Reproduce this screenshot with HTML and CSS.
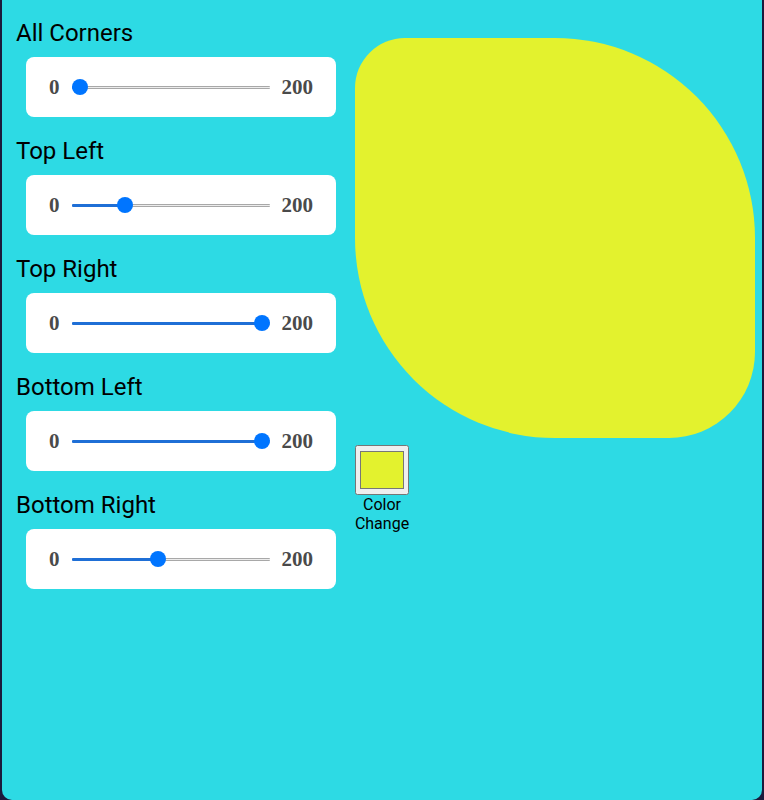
FILE: index.html
```html
<!DOCTYPE html>
<html>
<head>
<meta charset="utf-8">
<link rel="stylesheet" href="styles.css">
</head>
<body>
<div class="app">
  <div class="controls">
    <h2 class="label">All Corners</h2>
    <div class="card"><span class="num">0</span><input class="slider" type="range" min="0" max="200" value="0" style="--p:0"><span class="num">200</span></div>
    <h2 class="label">Top Left</h2>
    <div class="card"><span class="num">0</span><input class="slider" type="range" min="0" max="200" value="50" style="--p:0.25"><span class="num">200</span></div>
    <h2 class="label">Top Right</h2>
    <div class="card"><span class="num">0</span><input class="slider" type="range" min="0" max="200" value="200" style="--p:1"><span class="num">200</span></div>
    <h2 class="label">Bottom Left</h2>
    <div class="card"><span class="num">0</span><input class="slider" type="range" min="0" max="200" value="200" style="--p:1"><span class="num">200</span></div>
    <h2 class="label">Bottom Right</h2>
    <div class="card"><span class="num">0</span><input class="slider" type="range" min="0" max="200" value="86" style="--p:0.43"><span class="num">200</span></div>
  </div>
  <div class="preview">
    <div class="shape"></div>
    <div class="picker">
      <input type="color" value="#e3f22e">
      <span class="picker-text">Color<br>Change</span>
    </div>
  </div>
</div>
</body>
</html>
```

FILE: styles.css
```css
html, body {
  margin: 0;
  padding: 0;
  background: #1b1a3c;
}
.app {
  box-sizing: border-box;
  margin: 0 2px;
  height: 800px;
  background: #2ddae4;
  border-radius: 0 0 10px 10px;
  display: flex;
  font-family: Roboto, "Liberation Sans", sans-serif;
}
.controls {
  width: 353px;
  padding: 20px 0 0 14px;
  box-sizing: border-box;
}
.label {
  margin: 0 0 11px 0;
  font-size: 24px;
  line-height: 26px;
  font-weight: 400;
  color: #000;
}
.card {
  margin: 0 0 21px 10px;
  width: 310px;
  height: 60px;
  background: #fff;
  border-radius: 8px;
  display: flex;
  align-items: center;
  justify-content: center;
  gap: 12px;
}
.num {
  font-family: "Liberation Serif", serif;
  font-weight: 700;
  font-size: 21px;
  color: #4a4a4a;
}
.slider {
  -webkit-appearance: none;
  appearance: none;
  width: 198px;
  height: 16px;
  margin: 0;
  background: transparent;
}
.slider::-webkit-slider-runnable-track {
  height: 3px;
  border-radius: 1px;
  background:
    linear-gradient(to right, #1f6fd6 0, #1f6fd6 calc(var(--p) * (100% - 16px) + 8px), transparent calc(var(--p) * (100% - 16px) + 8px)),
    linear-gradient(to bottom, #a8a8a8 0, #a8a8a8 1px, #ececec 1px, #ececec 2px, #a8a8a8 2px);
}
.slider::-webkit-slider-thumb {
  -webkit-appearance: none;
  appearance: none;
  width: 16px;
  height: 16px;
  margin-top: -6.5px;
  border-radius: 50%;
  background: #0075ff;
  border: none;
}
.preview {
  padding-top: 38px;
  display: flex;
  flex-direction: column;
  align-items: flex-start;
}
.shape {
  width: 400px;
  height: 400px;
  background: #e3f22e;
  border-radius: 50px 200px 86px 200px;
}
.picker {
  margin-top: 7px;
  display: flex;
  flex-direction: column;
  align-items: center;
  width: 54px;
}
.picker input[type=color] {
  width: 54px;
  height: 50px;
  margin: 0;
}
.picker-text {
  font-size: 16px;
  line-height: 19px;
  text-align: center;
  color: #000;
}
```
